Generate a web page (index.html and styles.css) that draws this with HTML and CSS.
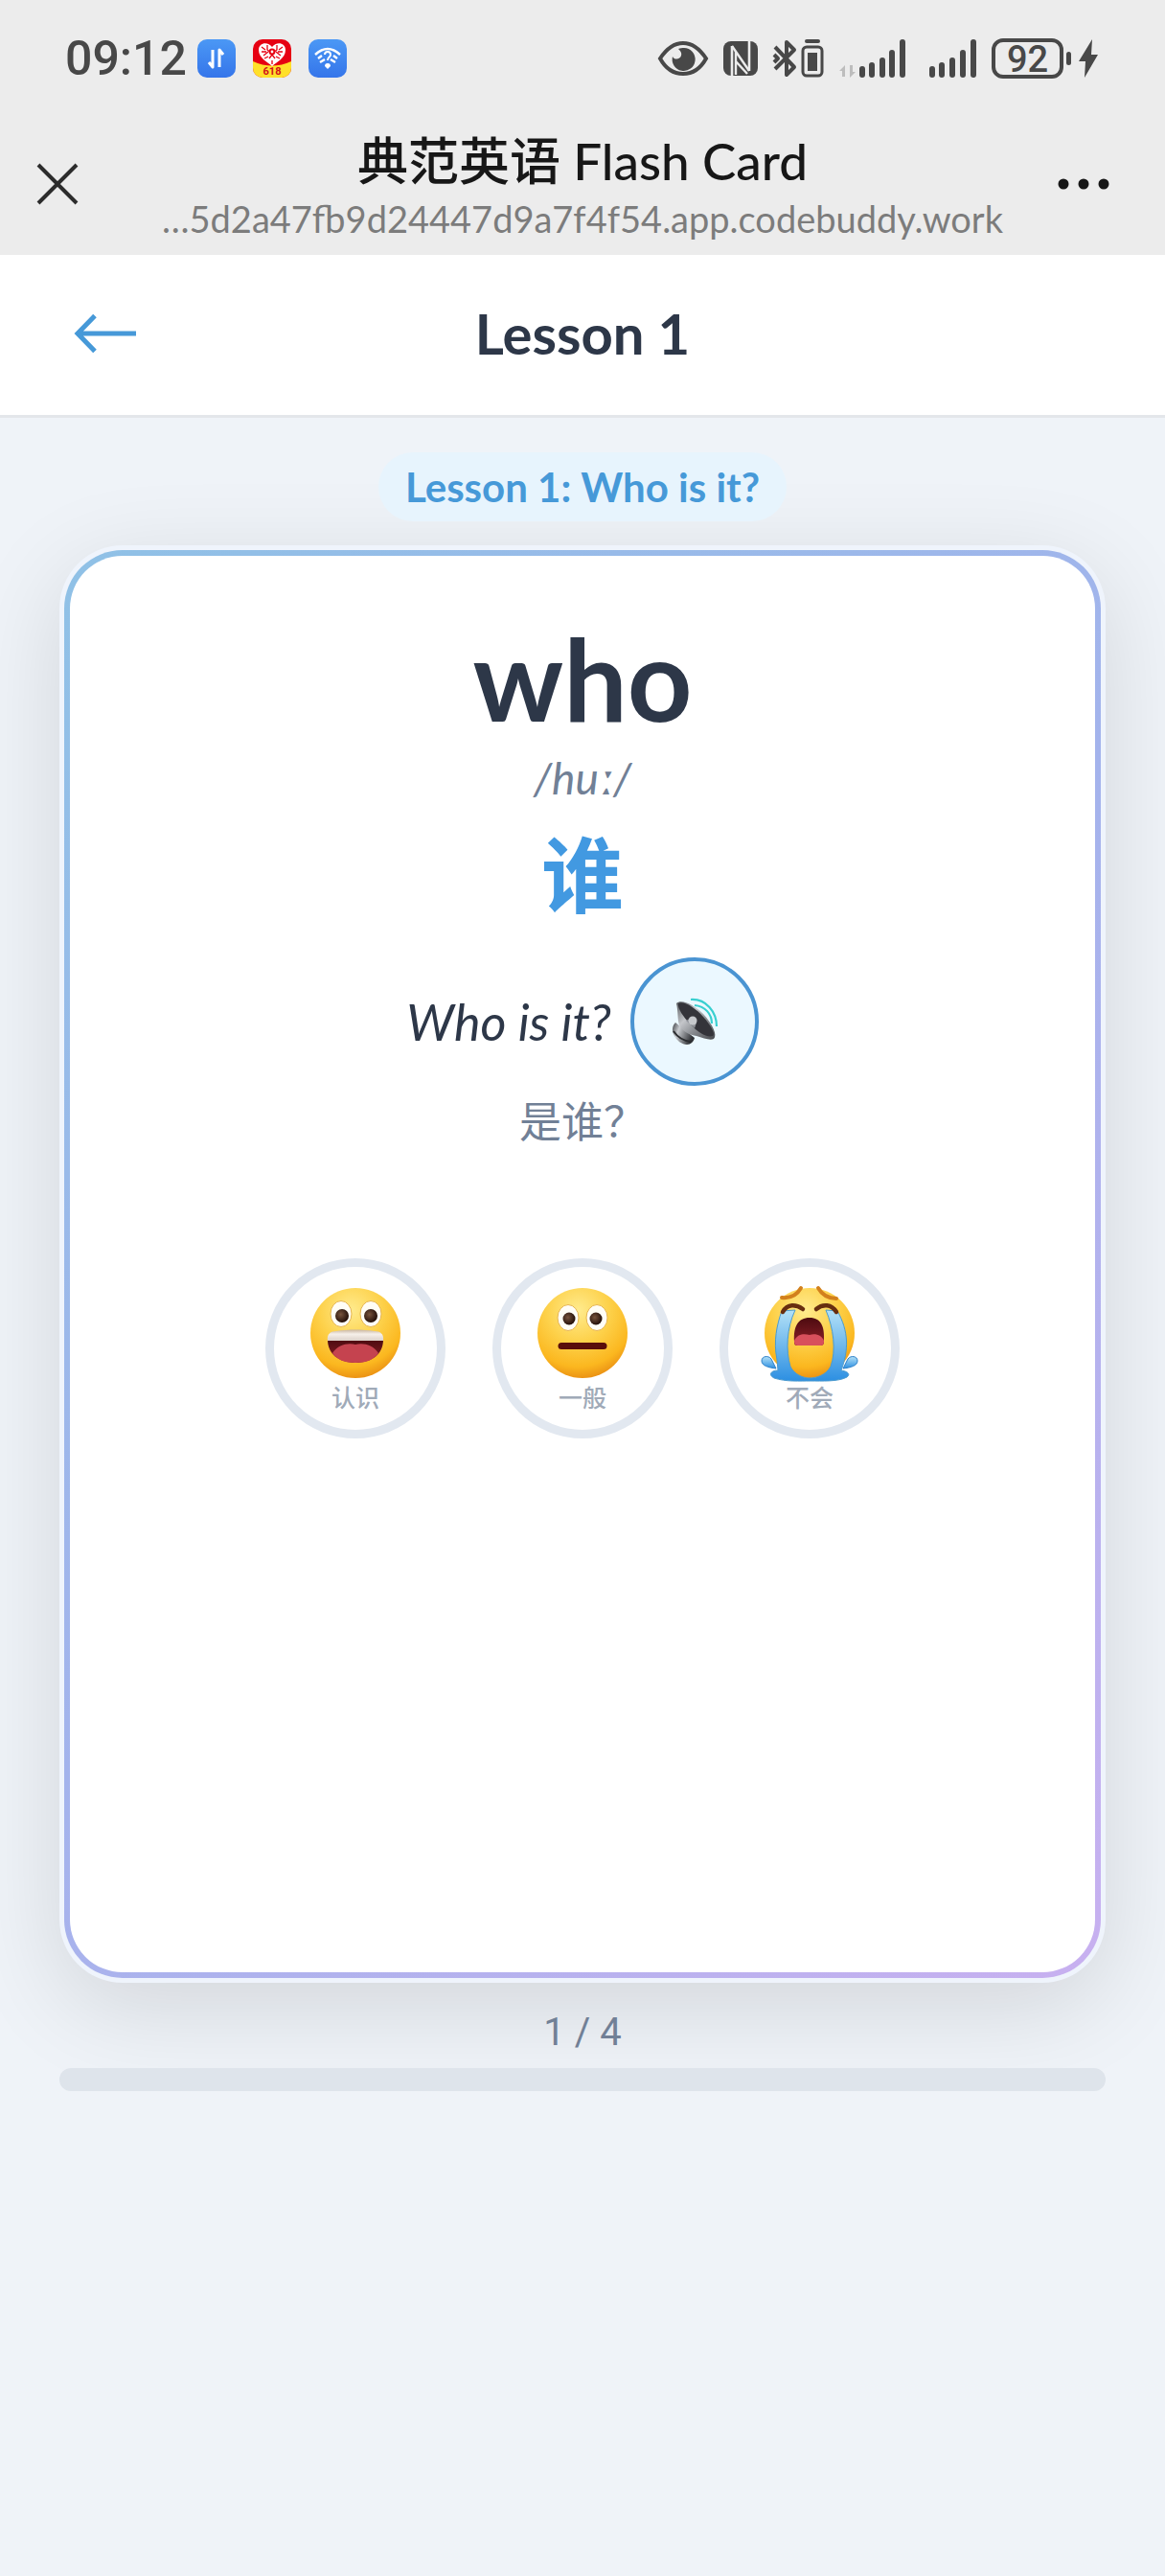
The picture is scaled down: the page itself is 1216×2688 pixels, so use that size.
FILE: index.html
```html
<!DOCTYPE html>
<html lang="zh-CN">
<head>
<meta charset="utf-8">
<meta name="viewport" content="width=device-width, initial-scale=1">
<title>典范英语 Flash Card</title>
<link rel="stylesheet" href="styles.css">
</head>
<body>
<div class="browser">
  <div class="status">
    <div class="status-left">
      <span class="clock">09:12</span>
      <svg class="app" viewBox="0 0 40 40" aria-hidden="true">
        <defs><linearGradient id="blue" x1="0" y1="0" x2="0" y2="1"><stop offset="0" stop-color="#4b98f5"/><stop offset="1" stop-color="#3575ea"/></linearGradient></defs>
        <rect width="40" height="40" rx="10" fill="url(#blue)"/>
        <path d="M16 11V29L12 24M23 29V11L27 16" fill="none" stroke="#fff" stroke-width="3" stroke-linejoin="round"/>
      </svg>
      <svg class="app" viewBox="0 0 40 40" aria-hidden="true">
        <defs><clipPath id="tile"><rect width="40" height="40" rx="10"/></clipPath></defs>
        <g clip-path="url(#tile)">
          <rect width="40" height="40" fill="#e60012"/>
          <path d="M0 23Q20 32 40 23V40H0Z" fill="#ffe02a"/>
        </g>
        <path d="M20 28C16 24 6 20 6 11C6 3 16 2 20 8C24 2 34 3 34 11C34 20 24 24 20 28Z" fill="#fff"/>
        <path d="M9 8l4 3M9 13h5M11 17l5-4M15 6v5l4 3M17 20l3-4 3 4M20 22v4M31 8l-4 3M31 13h-5M29 17l-5-4M25 6v5l-4 3M12 20l4-2M28 20l-4-2" stroke="#e60012" stroke-width="1.3" fill="none"/>
        <circle cx="20" cy="13" r="3.4" fill="#e60012"/><circle cx="20" cy="13" r="1.4" fill="#fff"/>
        <text x="20" y="37" class="promo">618</text>
      </svg>
      <svg class="app" viewBox="0 0 40 40" aria-hidden="true">
        <rect width="40" height="40" rx="10" fill="url(#blue)"/>
        <g fill="none" stroke="#fff" stroke-width="2.4">
          <path d="M7 16Q20 4 33 16M10 20l4-3M12 24l5-3M30 20l-4-3M28 24l-5-3"/>
          <path d="M17 16c0-4 6-4 6 0c0 3-3 2-3 6" stroke-width="2"/>
        </g>
        <path d="M17 28a3 3 0 0 1 6 0l-3 3z" fill="#fff"/>
      </svg>
    </div>
    <div class="status-right">
      <svg class="eye" viewBox="0 0 52 42" aria-hidden="true">
        <path d="M2 21C8 12 16 5 26 5S44 12 50 21C44 32 36 37 26 37S8 32 2 21Z" fill="none" stroke="#484848" stroke-width="4"/>
        <path d="M21 11c2-1 4-1 6-1a12 12 0 1 1-12 9c2 4 8 3 9-1 1-3-1-5-3-7z" fill="#484848"/>
      </svg>
      <svg class="nfc" viewBox="0 0 36 42" aria-hidden="true">
        <rect y="3" width="36" height="36" rx="8" fill="#484848"/>
        <path d="M9 39V8M27 3V34" fill="none" stroke="#ececec" stroke-width="2.6"/>
        <path d="M9 8L27 34M13 14V38M13 24L25 37" fill="none" stroke="#ececec" stroke-width="2.4"/>
      </svg>
      <svg class="bt" viewBox="0 0 54 42" aria-hidden="true">
        <path d="M2 9L22 30L14 38V4L22 12L2 32M1 17l4 4-4 4" fill="none" stroke="#484848" stroke-width="4" stroke-linejoin="round"/>
        <path d="M35 3h12" stroke="#484848" stroke-width="4" stroke-linecap="round"/>
        <rect x="31" y="9" width="20" height="30" rx="4" fill="none" stroke="#484848" stroke-width="3"/>
        <rect x="36" y="15" width="10" height="19" fill="#484848"/>
      </svg>
      <svg class="sig-data" viewBox="0 0 70 42" aria-hidden="true">
        <path d="M0 34l6-6v12H3v-6zM17 35l-6 6V28h3v7z" fill="#bdbdbd"/>
        <g stroke="#484848" stroke-width="6" stroke-linecap="round"><path d="M24 32v6M34 28v10M45 23v15M55 15v23M66 4v34"/></g>
      </svg>
      <svg class="sig" viewBox="0 0 49 42" aria-hidden="true">
        <g stroke="#484848" stroke-width="6" stroke-linecap="round"><path d="M3 32v6M13 28v10M24 23v15M35 15v23M46 4v34"/></g>
      </svg>
      <div class="battery"><span class="level">92</span><span class="nub"></span></div>
      <svg class="bolt" viewBox="0 0 20 42" aria-hidden="true"><path d="M14 1L0 24h7L6 41 20 17h-7z" fill="#484848"/></svg>
    </div>
  </div>
  <div class="nav">
    <button class="icon-btn" type="button" aria-label="关闭"><svg width="42" height="42" viewBox="0 0 42 42"><path d="M1 1L41 41M41 1L1 41" stroke="#2c2c2c" stroke-width="4"/></svg></button>
    <div class="nav-text">
      <div class="nav-title">典范英语 Flash Card</div>
      <div class="nav-url">…5d2a47fb9d24447d9a7f4f54.app.codebuddy.work</div>
    </div>
    <button class="icon-btn more" type="button" aria-label="更多"><svg width="54" height="12" viewBox="0 0 54 12"><g fill="#171717"><circle cx="6" cy="6" r="5.5"/><circle cx="27" cy="6" r="5.5"/><circle cx="48" cy="6" r="5.5"/></g></svg></button>
  </div>
</div>

<header class="header">
  <button class="back" type="button" aria-label="返回"><svg width="64" height="40" viewBox="0 0 64 40"><path d="M64 20H4M21 1.500L3 20L21 38.500" fill="none" stroke="#4699d8" stroke-width="5"/></svg></button>
  <h1 class="title">Lesson 1</h1>
</header>

<main class="main">
  <div class="chip">Lesson 1: Who is it?</div>
  <section class="card-ring">
    <div class="card">
      <h2 class="word">who</h2>
      <p class="phonetic">/huː/</p>
      <p class="meaning">谁</p>
      <div class="sentence">
        <span class="sentence-text">Who is it?</span>
        <button class="speak" type="button" aria-label="播放">
          <svg width="50" height="50" viewBox="0 0 50 50">
            <defs>
              <linearGradient id="metal" x1="0" y1="0" x2="1" y2="1"><stop offset="0" stop-color="#55585c"/><stop offset=".35" stop-color="#c4c6ca"/><stop offset=".6" stop-color="#8b8e93"/><stop offset="1" stop-color="#46484c"/></linearGradient>
              <linearGradient id="base" x1="0" y1="0" x2="1" y2="0.4"><stop offset="0" stop-color="#3a3c40"/><stop offset=".35" stop-color="#c9ccd0"/><stop offset="1" stop-color="#303236"/></linearGradient>
            </defs>
            <path d="M5 26C2 29 1 34 3 38C6 45 12 49 17 49C21 49 24 46 25 42Z" fill="url(#base)"/>
            <path d="M3 35C7 41 13 45 21 46" fill="none" stroke="#2b2d30" stroke-width="2"/>
            <path d="M6 6C8 15 7 22 9 29C13 36 20 39 27 40C34 42 41 45 45 43C49 39 44 28 34 17C24 7 11 1 6 6Z" fill="url(#metal)"/>
            <path d="M8 6C14 3 26 11 34 20C42 29 47 38 44 40C38 42 29 37 21 28C13 20 7 11 8 6Z" fill="#34343a"/>
            <path d="M16 24l6-3 5 5-2 6z" fill="#8f9298"/>
            <circle cx="23" cy="24" r="4.500" fill="#c6c8cc"/>
            <path d="M21 2C37 1 48 15 48 30M25 8C36 9 43 17 43 27" fill="none" stroke="#39cfd0" stroke-width="2.200"/>
          </svg>
        </button>
      </div>
      <p class="translation">是谁？</p>
      <div class="ratings">
        <button class="rate" type="button">
          <svg class="face" viewBox="0 0 94 94" aria-hidden="true">
            <defs>
              <radialGradient id="skin" cx=".45" cy=".25" r=".78"><stop offset="0" stop-color="#ffeb8e"/><stop offset=".45" stop-color="#fdd14a"/><stop offset=".8" stop-color="#fbb71f"/><stop offset="1" stop-color="#e88b12"/></radialGradient>
              <radialGradient id="pupil" cx=".4" cy=".4" r=".6"><stop offset="0" stop-color="#77533c"/><stop offset="1" stop-color="#24100a"/></radialGradient>
              <linearGradient id="mouth" x1="0" y1="0" x2="0" y2="1"><stop offset="0" stop-color="#4d0b10"/><stop offset="1" stop-color="#8d2028"/></linearGradient>
              <linearGradient id="teeth" x1="0" y1="0" x2="0" y2="1"><stop offset="0" stop-color="#c9b5a0"/><stop offset=".4" stop-color="#f6f0ea"/><stop offset="1" stop-color="#dcd2ca"/></linearGradient>
              <linearGradient id="tear" x1="0" y1="0" x2="0" y2="1"><stop offset="0" stop-color="#b3e1f7"/><stop offset="1" stop-color="#2c8fe2"/></linearGradient>
            </defs>
            <circle cx="47" cy="47" r="47" fill="url(#skin)"/>
            <g fill="#fffdf6" stroke="#e7b54f" stroke-width="1"><ellipse cx="32" cy="27" rx="11" ry="13.500"/><ellipse cx="63" cy="27" rx="11" ry="13.500"/></g>
            <circle cx="33" cy="29" r="7" fill="url(#pupil)"/><circle cx="63" cy="29" r="7" fill="url(#pupil)"/>
            <path d="M18 54C18 69 30 78 47 78S76 69 76 54Z" fill="url(#mouth)"/>
            <path d="M23 68C29 59 39 57 47 59C55 57 65 59 71 68C66 75 58 78 47 78S28 75 23 68Z" fill="#c5434f"/>
            <path d="M18 55C17 48 21 45 27 45C40 43 54 43 67 45C73 45 77 48 76 55Z" fill="url(#teeth)"/>
          </svg>
          <span class="rate-label">认识</span>
        </button>
        <button class="rate" type="button">
          <svg class="face" viewBox="0 0 94 94" aria-hidden="true">
            <circle cx="47" cy="47" r="47" fill="url(#skin)"/>
            <g fill="#fffdf6" stroke="#e7b54f" stroke-width="1"><ellipse cx="32" cy="31" rx="11" ry="13.500"/><ellipse cx="62" cy="31" rx="11" ry="13.500"/></g>
            <circle cx="33" cy="32" r="6.500" fill="url(#pupil)"/><circle cx="61" cy="32" r="6.500" fill="url(#pupil)"/>
            <path d="M25 60.500H69" stroke="#590d0b" stroke-width="7" stroke-linecap="round"/>
          </svg>
          <span class="rate-label">一般</span>
        </button>
        <button class="rate" type="button">
          <svg class="face" viewBox="0 0 94 94" aria-hidden="true">
            <circle cx="47" cy="47" r="47" fill="url(#skin)"/>
            <path d="M18 10C27 11 34 7 38 0M56 0C60 7 67 11 75 11" fill="none" stroke="#d2801d" stroke-width="4" stroke-linecap="round"/>
            <path d="M18 24C13 38 9 55 13 75L14 86C6 86 4 91 10 94C22 98 37 97 48 97S77 98 86 93C90 90 87 87 80 86C88 65 88 45 76 24L64 23C72 42 75 65 69 82C64 91 54 94 47 94S31 90 27 82C22 65 23 42 32 23Z" fill="url(#tear)" stroke="#4b9bcf" stroke-width="1"/>
            <path d="M19 25C24 16 33 17 40 22M54 22C61 16 70 17 75 25" fill="none" stroke="#672e10" stroke-width="4.500" stroke-linecap="round"/>
            <path d="M31 56C30 40 35 31 47 31S63 40 62 56C62 60 60 60 57 60H36C32 60 31 60 31 56Z" fill="url(#mouth)"/>
            <path d="M31 55C35 47 42 48 47 49C54 47 60 50 62 55C62 60 60 60 57 60H36C32 60 31 59 31 55Z" fill="#d8505c"/>
            <g fill="url(#tear)" stroke="#2b80c9" stroke-width="1"><path d="M12 84C4 83-3 81-3 76C-3 71 4 70 7 74Z"/><path d="M82 84C90 83 97 81 97 76C97 71 90 70 87 74Z"/></g>
          </svg>
          <span class="rate-label">不会</span>
        </button>
      </div>
    </div>
  </section>
  <div class="counter">1 / 4</div>
  <div class="progress" role="progressbar" aria-label="进度" aria-valuemin="0" aria-valuemax="4" aria-valuenow="0"></div>
</main>
</body>
</html>
```
FILE: styles.css
```css
* { box-sizing: border-box; }
body {
  margin: 0;
  background: #eff3f8;
  color: #2d3748;
  font-family: Lato, "Noto Sans CJK SC", sans-serif;
}
h1, h2, p { margin: 0; }
button {
  padding: 0;
  border: 0;
  background: none;
  font: inherit;
  cursor: pointer;
}
svg { display: block; overflow: visible; }

/* phone status bar and in-app browser bar */
.browser { padding-bottom: 14px; background: #ececec; }
.status {
  display: flex;
  justify-content: space-between;
  padding: 40px 70px 0 68px;
}
.status-left, .status-right { display: flex; align-items: center; height: 42px; }
.status-left { gap: 18px; }
.clock {
  width: 120px;
  font-family: Roboto, sans-serif;
  font-size: 50px;
  line-height: 42px;
  font-weight: 500;
  color: #484848;
}
.app { width: 40px; height: 40px; }
.promo { font: 700 11px Roboto, sans-serif; fill: #d0101a; text-anchor: middle; }
.eye { width: 52px; height: 42px; margin-right: 16px; }
.nfc { width: 36px; height: 42px; margin-right: 16px; }
.bt { width: 54px; height: 42px; margin-right: 15px; }
.sig-data { width: 70px; height: 42px; margin-right: 24px; }
.sig { width: 49px; height: 42px; margin-right: 16px; }
.battery { display: flex; align-items: center; gap: 3px; margin-right: 8px; }
.level {
  width: 75px;
  height: 42px;
  border: 4px solid #484848;
  border-radius: 12px;
  font: 500 38px/36px Roboto, sans-serif;
  text-align: center;
  color: #484848;
}
.nub { width: 5px; height: 14px; border-radius: 3px; background: #484848; }
.bolt { width: 20px; height: 42px; }
.nav {
  display: grid;
  grid-template-columns: 120px 1fr 120px;
  align-items: center;
  padding-top: 50px;
}
.icon-btn { justify-self: center; }
.more { justify-self: end; margin-right: 58px; }
.nav-text { text-align: center; white-space: nowrap; }
.nav-title { font-size: 53px; line-height: 72px; font-weight: 500; color: #171717; }
.nav-url { font-size: 38px; line-height: 48px; color: #7c7c7c; }

.header {
  display: grid;
  grid-template-columns: 64px 1fr 64px;
  align-items: center;
  height: 170px;
  padding: 0 78px 4px;
  border-bottom: 3px solid #e3e6ea;
  background: #fff;
}
.title { font-size: 58px; line-height: 68px; text-align: center; }

.main {
  display: flex;
  flex-direction: column;
  align-items: center;
  padding: 36px 62px 0;
}
.chip {
  position: relative;
  z-index: 1;
  padding: 0 28px;
  border-radius: 36px;
  background: #e7f4fd;
  color: #4699d8;
  font-size: 42px;
  font-weight: 700;
  line-height: 72px;
}
.card-ring {
  align-self: stretch;
  min-height: 1500px;
  display: flex;
  margin-top: 25px;
  padding: 5px;
  border-radius: 66px;
  background: #eff4fc;
  box-shadow: 0 25px 100px rgba(0, 0, 0, 0.12);
}
.card {
  flex: 1;
  display: flex;
  flex-direction: column;
  align-items: center;
  padding-top: 68px;
  border: 6px solid transparent;
  border-radius: 61px;
  background:
    linear-gradient(#fff, #fff) padding-box,
    linear-gradient(135deg, #8fc1e6, #a3b3ec 50%, #c8b0f0) border-box;
}
.word { font-size: 118px; line-height: 120px; }
.phonetic { margin-top: 14px; font-size: 46px; line-height: 60px; font-style: italic; color: #718096; }
.meaning { margin-top: 11px; font-size: 86px; line-height: 120px; font-weight: 700; color: #4299e1; }
.sentence { display: flex; align-items: center; gap: 20px; margin-top: 26px; }
.sentence-text { font-size: 52px; font-style: italic; }
.speak {
  display: grid;
  place-items: center;
  width: 134px;
  height: 134px;
  border: 4px solid #4a94d2;
  border-radius: 50%;
  background: #ebf8ff;
}
.translation { margin-top: 5px; font-size: 44px; line-height: 64px; color: #718096; }
.ratings { display: flex; gap: 49px; margin-top: 111px; }
.rate {
  display: flex;
  flex-direction: column;
  align-items: center;
  width: 188px;
  height: 188px;
  padding-top: 22px;
  border: 9px solid #e2e8f0;
  border-radius: 50%;
  background: #fff;
}
.face { width: 94px; height: 94px; }
.rate-label { margin-top: 2px; font-size: 25px; line-height: 36px; font-weight: 500; color: #a0aab8; }

.counter {
  margin-top: 24px;
  font-family: Roboto, sans-serif;
  font-size: 40px;
  line-height: 56px;
  color: #718096;
}
.progress {
  align-self: stretch;
  height: 24px;
  margin-top: 9px;
  border-radius: 12px;
  background: #dee4eb;
}
```
